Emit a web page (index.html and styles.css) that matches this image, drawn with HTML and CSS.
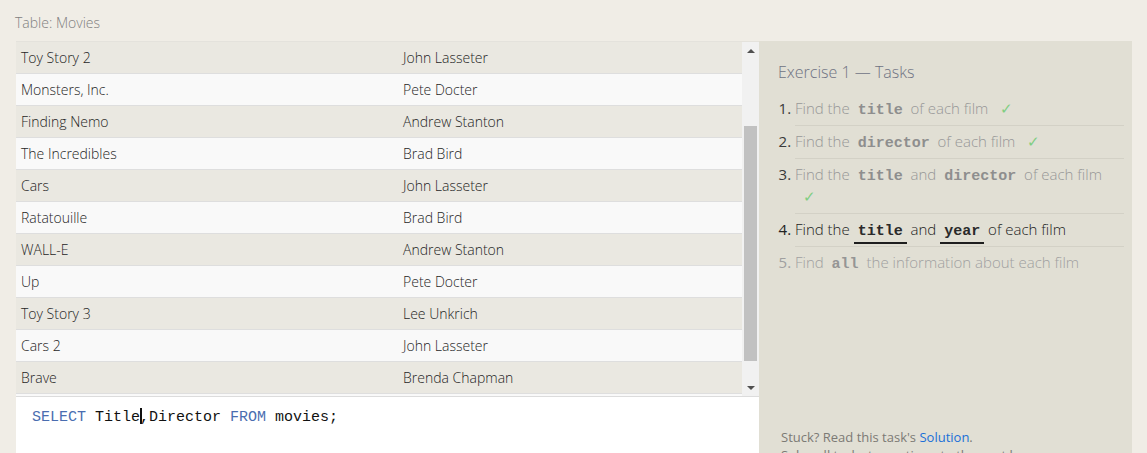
FILE: index.html
```html
<!DOCTYPE html>
<html>
<head>
<meta charset="utf-8">
<link rel="stylesheet" href="styles.css">
</head>
<body>
<div class="page">
  <div class="left">
    <div class="caption">Table: Movies</div>
    <div class="tablewrap">
      <div class="rows">
        <div class="row odd"><span>Toy Story 2</span><span>John Lasseter</span></div>
        <div class="row"><span>Monsters, Inc.</span><span>Pete Docter</span></div>
        <div class="row odd"><span>Finding Nemo</span><span>Andrew Stanton</span></div>
        <div class="row"><span>The Incredibles</span><span>Brad Bird</span></div>
        <div class="row odd"><span>Cars</span><span>John Lasseter</span></div>
        <div class="row"><span>Ratatouille</span><span>Brad Bird</span></div>
        <div class="row odd"><span>WALL-E</span><span>Andrew Stanton</span></div>
        <div class="row"><span>Up</span><span>Pete Docter</span></div>
        <div class="row odd"><span>Toy Story 3</span><span>Lee Unkrich</span></div>
        <div class="row"><span>Cars 2</span><span>John Lasseter</span></div>
        <div class="row odd"><span>Brave</span><span>Brenda Chapman</span></div>
        <div class="row"></div>
      </div>
      <div class="scrollbar">
        <div class="arrow up"></div>
        <div class="track"><div class="thumb"></div></div>
        <div class="arrow down"></div>
      </div>
    </div>
    <div class="editor"><span class="kw">SELECT</span> Title<span class="cursor"></span>,Director <span class="kw">FROM</span> movies;</div>
  </div>
  <div class="panel">
    <div class="panel-title">Exercise 1 — Tasks</div>
    <ol class="tasks">
      <li class="done"><span class="txt">Find the <code>title</code> of each film</span> <span class="check">✓</span></li>
      <li class="done"><span class="txt">Find the <code>director</code> of each film</span> <span class="check">✓</span></li>
      <li class="done"><span class="txt">Find the <code>title</code> and <code>director</code> of each film</span> <span class="check">✓</span></li>
      <li class="active">Find the <code>title</code> and <code>year</code> of each film</li>
      <li class="todo">Find <code>all</code> the information about each film</li>
    </ol>
    <div class="footer">
      <p>Stuck? Read this task's <a class="link">Solution</a>.</p>
      <p>Solve all tasks to continue to the next lesson.</p>
    </div>
  </div>
</div>
</body>
</html>
```

FILE: styles.css
```css
html, body {
  margin: 0;
  padding: 0;
  height: 100%;
  overflow: hidden;
}
body {
  background: #f0ede6;
  font-family: "Open Sans", "Liberation Sans", sans-serif;
  color: #333;
}
.page {
  display: flex;
  padding-left: 16px;
  height: 453px;
}
.left {
  width: 743px;
  display: flex;
  flex-direction: column;
}
.caption {
  height: 41px;
  box-sizing: border-box;
  padding-top: 12px;
  margin-left: -1px;
  font-size: 14px;
  line-height: 21px;
  color: #808080;
  font-weight: 300;
}
.tablewrap {
  display: flex;
  height: 356px;
  box-sizing: border-box;
  border-top: 1px solid #e4e2dc;
  border-bottom: 1px solid #dcdcdc;
}
.rows {
  flex: 1;
  overflow: hidden;
  background: #f9f9f9;
}
.row {
  display: grid;
  grid-template-columns: 382px 1fr;
  height: 31px;
  border-bottom: 1px solid #dedede;
  background: #f9f9f9;
  font-size: 14px;
  line-height: 31px;
  font-weight: 300;
  color: #1f1f1f;
}
.row.odd {
  background: #eae8e1;
}
.row span {
  padding-left: 5px;
  white-space: nowrap;
}
.scrollbar {
  width: 17px;
  background: #f1f1f1;
  display: flex;
  flex-direction: column;
}
.arrow {
  height: 17px;
  display: flex;
  align-items: center;
  justify-content: center;
}
.arrow::before {
  content: "";
  width: 0;
  height: 0;
  border-left: 4px solid transparent;
  border-right: 4px solid transparent;
}
.arrow.up::before {
  border-bottom: 4px solid #505050;
}
.arrow.down::before {
  border-top: 4px solid #505050;
}
.track {
  flex: 1;
  padding: 67px 2px 0 2px;
}
.thumb {
  height: 235px;
  background: #c1c1c1;
}
.editor {
  flex: 1;
  background: #fff;
  padding: 11px 0 0 16px;
  font-family: "Liberation Mono", "DejaVu Sans Mono", monospace;
  font-size: 15px;
  line-height: 20px;
  color: #111;
}
.kw {
  color: #4a6db0;
}
.cursor {
  display: inline-block;
  width: 2px;
  height: 16px;
  background: #111;
  vertical-align: -3px;
  margin-right: -2px;
}
.panel {
  width: 373px;
  margin-top: 41px;
  background: #e1dfd4;
  box-sizing: border-box;
  padding: 0 8px 0 19px;
  display: flex;
  flex-direction: column;
}
.panel-title {
  margin-top: 20px;
  font-size: 16px;
  line-height: 22px;
  color: #6f7383;
  font-weight: 300;
}
.tasks {
  margin: 10px 0 0 0;
  padding-left: 17px;
  font-size: 15px;
  font-weight: 300;
  line-height: 22px;
}
.tasks li {
  padding: 4px 0 6px 0;
  border-bottom: 1px solid #d3d1c6;
}
.tasks li:last-child {
  border-bottom: none;
}
.tasks li::marker {
  font-weight: 400;
}
.tasks li.done {
  color: #3a3a3a;
}
.tasks li.done .txt {
  color: #979797;
}
.tasks li.active {
  color: #222;
}
.tasks li.todo {
  color: #a0a0a0;
}
code {
  font-family: "Liberation Mono", "DejaVu Sans Mono", monospace;
  font-weight: 700;
  font-size: 15px;
  line-height: 1;
  padding: 0 4px;
}
.done code {
  color: #8e8e8e;
}
.todo code {
  color: #959595;
}
.active code {
  color: #2a2a2a;
  border-bottom: 2px solid #1e1e1e;
  padding-bottom: 2px;
}
.check {
  color: #7fce82;
  margin-left: 8px;
  font-weight: 400;
  line-height: 1;
}
.footer {
  margin-top: 149px;
  padding-left: 3px;
  font-size: 13px;
  line-height: 18px;
  color: #7c7a75;
}
.footer p {
  margin: 0;
}
.link {
  color: #1a6fd8;
}
```
